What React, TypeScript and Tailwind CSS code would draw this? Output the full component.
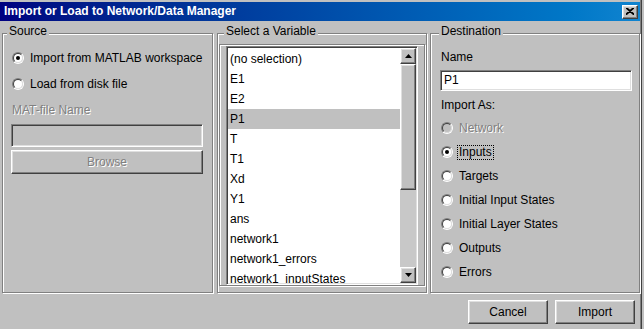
import { ReactNode } from "react";

const sunken =
  "border border-t-[#808080] border-l-[#808080] border-r-white border-b-white shadow-[inset_1px_1px_0_#404040,inset_-1px_-1px_0_#dfdfdf]";
const raised =
  "border border-t-white border-l-white border-r-[#404040] border-b-[#404040] shadow-[inset_-1px_-1px_0_#808080,inset_1px_1px_0_#dfdfdf]";
const disabledText = "text-[#808080] [text-shadow:1px_1px_0_#fff]";

const variables = [
  "(no selection)",
  "E1",
  "E2",
  "P1",
  "T",
  "T1",
  "Xd",
  "Y1",
  "ans",
  "network1",
  "network1_errors",
  "network1_inputStates",
];

function Group({
  title,
  offset,
  className,
  children,
}: {
  title: string;
  offset: string;
  className: string;
  children: ReactNode;
}) {
  return (
    <div
      className={`relative h-[260px] border border-[#808080] shadow-[inset_1px_1px_0_#fff,1px_1px_0_#fff] ${className}`}
    >
      <span
        className={`absolute -top-[11px] ${offset} bg-[#c0c0c0] px-[2px] leading-[16px]`}
      >
        {title}
      </span>
      {children}
    </div>
  );
}

function Radio({
  label,
  checked,
  disabled,
  focus,
}: {
  label: string;
  checked?: boolean;
  disabled?: boolean;
  focus?: boolean;
}) {
  return (
    <div className="flex items-center h-[16px] ml-[1px]">
      <div className="w-[12px] h-[12px] rounded-full border border-t-[#808080] border-l-[#808080] border-r-white border-b-white">
        <div
          className={`w-full h-full rounded-full border border-t-[#404040] border-l-[#404040] border-r-[#dfdfdf] border-b-[#dfdfdf] flex items-center justify-center ${
            disabled ? "bg-[#c0c0c0]" : "bg-white"
          }`}
        >
          {checked && <div className="w-[4px] h-[4px] rounded-full bg-black" />}
        </div>
      </div>
      <span
        className={`ml-[4px] px-[1px] leading-[13px] border ${
          focus ? "border-dotted border-black" : "border-transparent"
        } ${disabled ? disabledText : ""}`}
      >
        {label}
      </span>
    </div>
  );
}

function Arrow({ up }: { up?: boolean }) {
  return (
    <svg width="7" height="4" viewBox="0 0 7 4">
      <path d={up ? "M3.5 0 L7 4 L0 4 Z" : "M0 0 L7 0 L3.5 4 Z"} fill="#000" />
    </svg>
  );
}

export default function App() {
  return (
    <div
      className="w-[644px] h-[329px] bg-[#c0c0c0] overflow-hidden text-[12px] text-black"
      style={{ fontFamily: '"Liberation Sans", Arial, sans-serif' }}
    >
      <div className="w-[642px] h-full border-r border-[#404040]">
        <div className="w-[641px] h-full border-r border-[#808080] flex flex-col">
          <div className="h-[2px] shrink-0" />
          <div className="h-[19px] w-[640px] shrink-0 flex items-center justify-between bg-gradient-to-r from-[#000080] to-[#1084d0]">
            <span className="pl-[4px] font-bold text-white leading-[19px]">
              Import or Load to Network/Data Manager
            </span>
            <div
              className={`mr-[2px] w-[16px] h-[14px] bg-[#c0c0c0] flex items-center justify-center ${raised}`}
            >
              <svg width="8" height="7" viewBox="0 0 8 7">
                <path d="M0 0 L8 7 M8 0 L0 7 M1 0 L8 6 M7 0 L0 6" stroke="#000" strokeWidth="1.2" />
              </svg>
            </div>
          </div>

          <div className="flex mt-[12px] pl-[2px] gap-[3px]">
            <Group title="Source" offset="left-[4px]" className="w-[211px] mr-[1px]">
              <div className="flex flex-col pl-[8px] pt-[16px]">
                <Radio label="Import from MATLAB workspace" checked />
                <div className="mt-[10px]">
                  <Radio label="Load from disk file" />
                </div>
                <span className={`mt-[10px] ml-[1px] leading-[16px] ${disabledText}`}>
                  MAT-file Name
                </span>
                <div className={`mt-[6px] w-[192px] h-[23px] bg-[#c0c0c0] ${sunken}`} />
                <div
                  className={`mt-[3px] w-[192px] h-[24px] flex items-center justify-center ${raised}`}
                >
                  <span className={disabledText}>Browse</span>
                </div>
              </div>
            </Group>

            <Group title="Select a Variable" offset="left-[6px]" className="w-[210px]">
              <div className="ml-[1px] mt-[10px] w-[206px] h-[242px] border border-[#808080] shadow-[inset_1px_1px_0_#fff,1px_1px_0_#fff] pl-[6px] pt-[1px]">
                <div className={`w-[192px] h-[239px] bg-white flex p-[1px] ${sunken}`}>
                  <div className="flex-1 overflow-hidden pt-[1px]">
                    {variables.map((v) => (
                      <div
                        key={v}
                        className={`h-[20px] leading-[20px] pl-[2px] whitespace-nowrap ${
                          v === "P1" ? "bg-[#c0c0c0]" : ""
                        }`}
                      >
                        {v}
                      </div>
                    ))}
                  </div>
                  <div className="w-[16px] flex flex-col bg-[#c8c8c8]">
                    <div
                      className={`h-[16px] bg-[#c0c0c0] flex items-center justify-center ${raised}`}
                    >
                      <Arrow up />
                    </div>
                    <div className={`h-[126px] bg-[#c0c0c0] ${raised}`} />
                    <div className="flex-1" />
                    <div
                      className={`h-[16px] bg-[#c0c0c0] flex items-center justify-center ${raised}`}
                    >
                      <Arrow />
                    </div>
                  </div>
                </div>
              </div>
            </Group>

            <Group title="Destination" offset="left-[8px]" className="w-[210px]">
              <div className="flex flex-col pl-[9px] pt-[15px]">
                <span className="leading-[16px] ml-[1px]">Name</span>
                <div className={`mt-[5px] w-[192px] h-[21px] bg-white pl-[3px] leading-[19px] ${sunken}`}>
                  P1
                </div>
                <span className="mt-[6px] ml-[1px] leading-[16px]">Import As:</span>
                <div className="mt-[7px] flex flex-col gap-[8px]">
                  <Radio label="Network" disabled />
                  <Radio label="Inputs" checked focus />
                  <Radio label="Targets" />
                  <Radio label="Initial Input States" />
                  <Radio label="Initial Layer States" />
                  <Radio label="Outputs" />
                  <Radio label="Errors" />
                </div>
              </div>
            </Group>
          </div>

          <div className="flex justify-end gap-[7px] mt-[7px] pr-[5px]">
            <div className={`w-[80px] h-[24px] flex items-center justify-center ${raised}`}>
              Cancel
            </div>
            <div className={`w-[80px] h-[24px] flex items-center justify-center ${raised}`}>
              Import
            </div>
          </div>
        </div>
      </div>
    </div>
  );
}
